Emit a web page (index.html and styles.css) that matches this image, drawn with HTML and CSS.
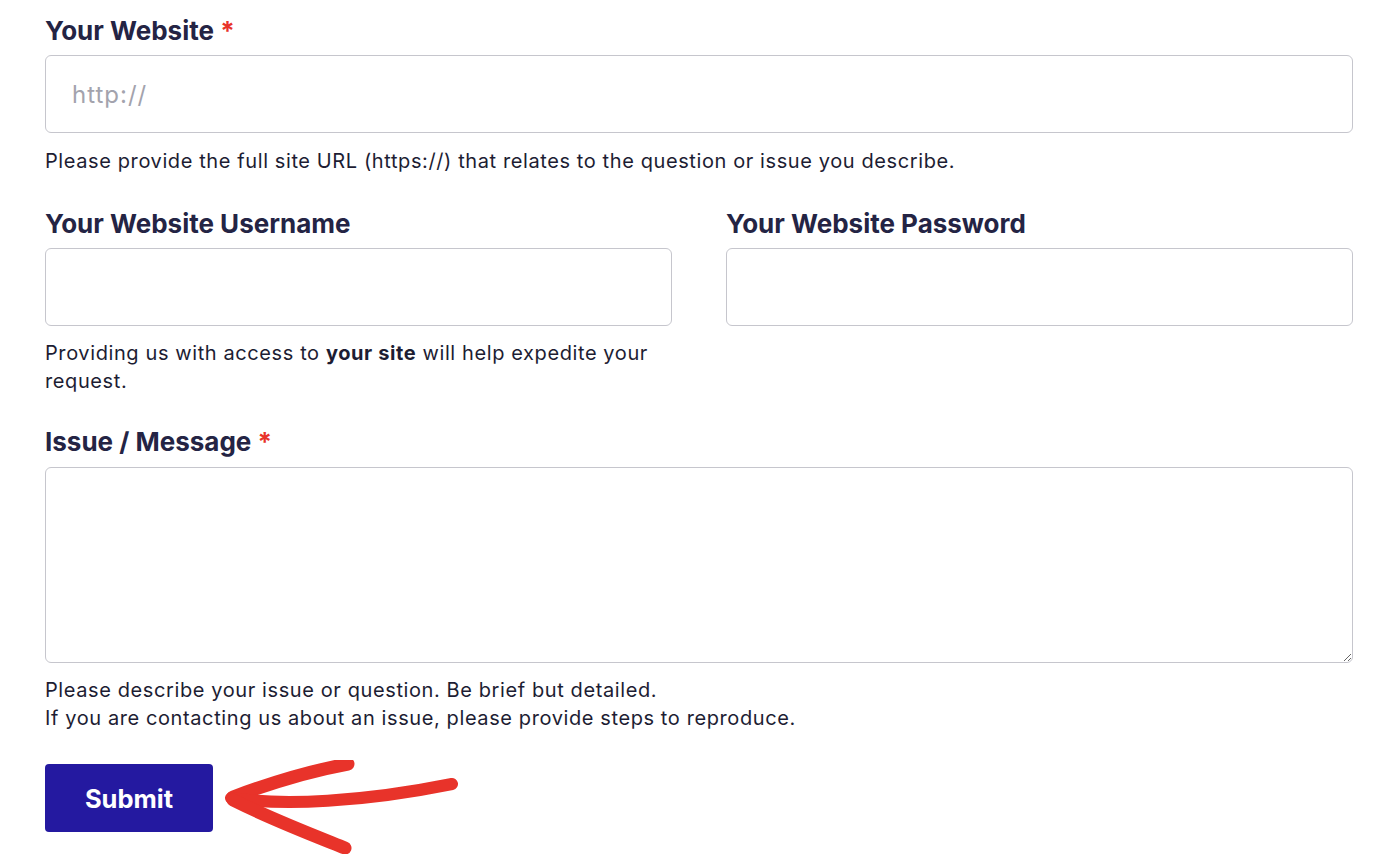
FILE: index.html
```html
<!DOCTYPE html>
<html lang="en">
<head>
<meta charset="utf-8">
<title>Support form</title>
<link rel="stylesheet" href="styles.css">
</head>
<body>
<form class="form">
  <div class="field">
    <label class="label">Your Website <span class="req">*</span></label>
    <input class="input" type="text" placeholder="http://">
    <p class="desc">Please provide the full site URL (https://) that relates to the question or issue you describe.</p>
  </div>
  <div class="row">
    <div class="field">
      <label class="label">Your Website Username</label>
      <input class="input" type="text">
      <p class="desc desc-tight">Providing us with access to <strong>your site</strong> will help expedite your request.</p>
    </div>
    <div class="field">
      <label class="label">Your Website Password</label>
      <input class="input" type="password">
    </div>
  </div>
  <div class="field">
    <label class="label">Issue / Message <span class="req">*</span></label>
    <textarea class="textarea"></textarea>
    <p class="desc desc-tight">Please describe your issue or question. Be brief but detailed.<br>If you are contacting us about an issue, please provide steps to reproduce.</p>
  </div>
  <div class="actions">
    <button class="submit" type="button">Submit</button>
    <svg class="arrow" width="240" height="110" viewBox="0 0 240 110" aria-hidden="true">
      <g fill="none" stroke="#e8332a" stroke-linecap="round" stroke-linejoin="round">
        <path d="M10 37 C 50 22, 92 10, 125 4" stroke-width="13"/>
        <path d="M8 38 C 60 46, 140 42, 229 24" stroke-width="12"/>
        <path d="M10 40 C 50 60, 92 76, 122 88" stroke-width="13"/>
      </g>
    </svg>
  </div>
</form>
</body>
</html>
```

FILE: styles.css
```css
* { box-sizing: border-box; }
html, body { margin: 0; padding: 0; background: #ffffff; }
body {
  font-family: Inter, "Noto Sans", "Liberation Sans", sans-serif;
  color: #1d1d33;
}
.form {
  width: 1308px;
  margin-left: 45px;
  padding-top: 16px;
}
.field {
  display: flex;
  flex-direction: column;
  margin-bottom: 34px;
}
.row {
  display: grid;
  grid-template-columns: 1fr 1fr;
  column-gap: 54px;
}
.row .field { margin-bottom: 32px; }
.label {
  font-size: 26px;
  line-height: 30px;
  font-weight: 700;
  color: #242444;
  margin-bottom: 9px;
}
.req { color: #e8332a; }
.input {
  height: 78px;
  border: 1.5px solid #c6c6cd;
  border-radius: 6px;
  padding: 0 26px;
  font-family: inherit;
  font-size: 24px;
  letter-spacing: 1px;
  color: #1d1d33;
  background: #fff;
  outline: none;
}
.input::placeholder { color: #a3a3ad; }
.textarea {
  height: 196px;
  border: 1.5px solid #c6c6cd;
  border-radius: 6px;
  padding: 16px 26px;
  font-family: inherit;
  font-size: 20px;
  resize: vertical;
  background: #fff;
  outline: none;
  margin-top: 1px;
}
.desc {
  margin: 14px 0 0;
  font-size: 20px;
  line-height: 28px;
  letter-spacing: 0.6px;
  color: #1d1d33;
}
.desc-tight { margin-top: 13px; }
.desc strong { font-weight: 700; }
.actions {
  position: relative;
  margin-top: -2px;
  height: 90px;
}
.submit {
  width: 168px;
  height: 68px;
  background: #2419a0;
  color: #ffffff;
  border: none;
  border-radius: 4px;
  font-family: inherit;
  font-size: 25.5px;
  font-weight: 700;
  cursor: pointer;
}
.arrow {
  position: absolute;
  left: 178px;
  top: -4px;
}
```
